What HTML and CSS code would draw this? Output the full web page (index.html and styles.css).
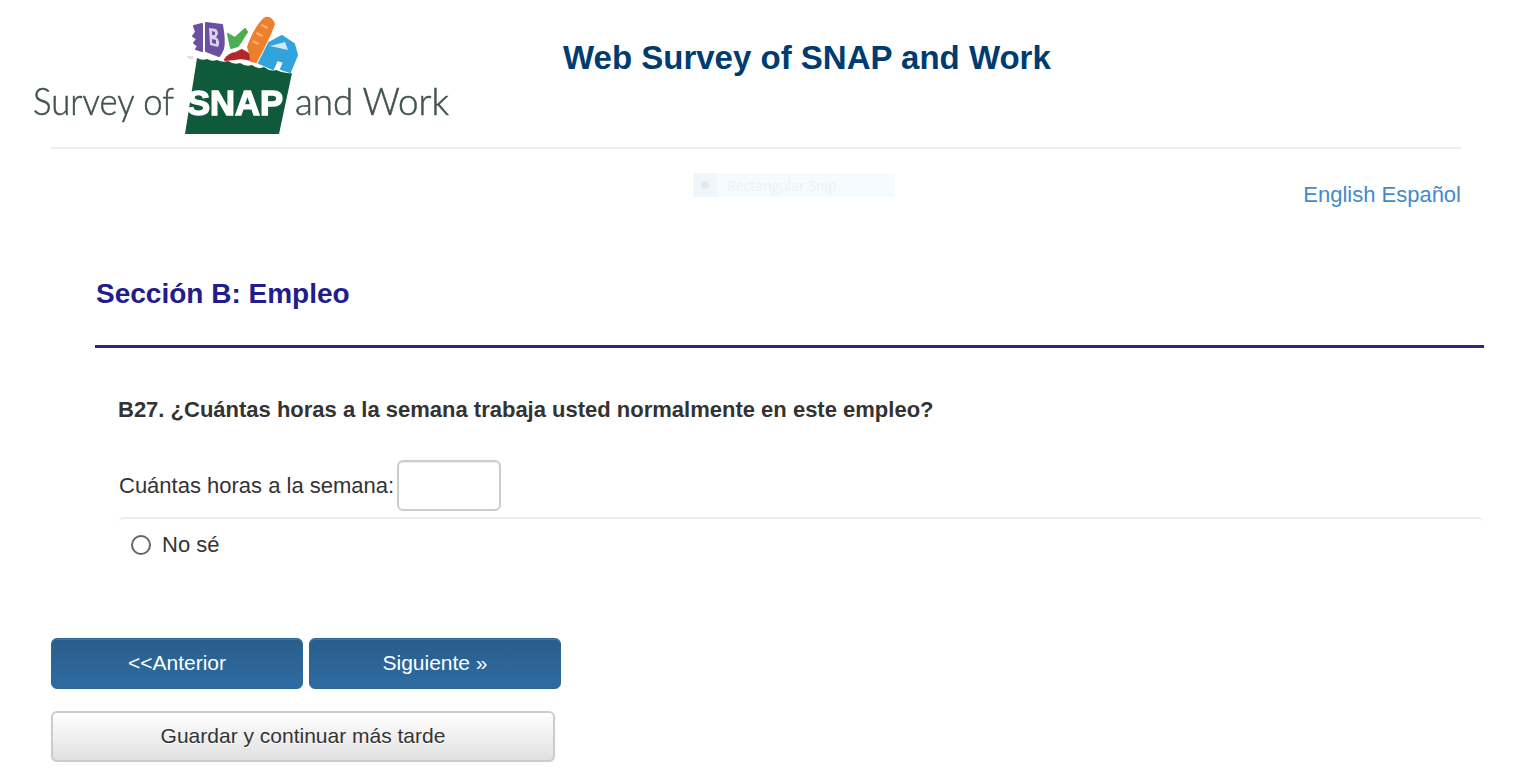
FILE: index.html
```html
<!DOCTYPE html>
<html lang="es">
<head>
    <meta charset="UTF-8">
    <title>Web Survey of SNAP and Work</title>
    <link rel="stylesheet" href="styles.css">
</head>
<body>
    <header class="site-header">
        <svg class="logo" width="430" height="135" viewBox="0 0 430 135" role="img" aria-label="Survey of SNAP and Work">
            <!-- cereal box -->
            <path class="food-box" d="M164 26 L172 24 L172 51 L166 49 L168 46 L164 43 L167 39 L163 36 L166 32 Z"/>
            <path class="food-box" d="M176 23 L192 25 Q195 42 193 49 Q191 54 189 56 L176 51 Z"/>
            <path class="food-box-letter" d="M179 28 L186 29 Q190 33 186 37 Q191 41 188 47 L180 45 Z M182 31 L182 35 L185 35 L185 32 Z M182 39 L182 43 L186 44 L186 40 Z"/>
            <!-- greens -->
            <path class="food-greens" d="M198 34 L205 38 L215 29 L217 32 L208 46 L201 48 Z"/>
            <!-- apple -->
            <path class="food-apple" d="M195 60 Q198 54 206 53 L212 50 L219 54 L221 60 Q212 57 205 59 Z"/>
            <!-- bread -->
            <path class="food-bread" d="M218 47 Q224 29 234 19 Q240 15 244 24 Q240 36 226 62 L221 61 Q221 54 218 47 Z"/>
            <path class="food-bread-marks" d="M232 24 L238 27 L237 29 L231 26 Z M227 32 L233 35 L232 37 L226 34 Z M223 40 L229 43 L228 45 L222 42 Z"/>
            <!-- milk carton -->
            <path class="food-carton" d="M229 63 L239 43 L252 36 L264 44 L267 55 L260 72 L251 69 L254 62 L247 60 L243 69 Z"/>
            <path class="food-carton-light" d="M240 46 L255 42 L258 50 Z"/>
            <!-- bag -->
            <path class="logo-bag" d="M167 58 Q172 61 177 59 Q182 62 187 60 Q193 63 198 61 Q204 65 210 63 Q216 67 222 65 Q228 70 234 67 Q240 72 246 70 Q254 74 262 73 L249 134 L155 134 Z"/>
            <text class="logo-snap" x="157" y="115" textLength="96" lengthAdjust="spacingAndGlyphs">SNAP</text>
            <text class="logo-tm" x="157" y="59">TM</text>
            <text class="logo-text" x="3" y="115" textLength="141" lengthAdjust="spacingAndGlyphs">Survey of</text>
            <text class="logo-text" x="265" y="115" textLength="154" lengthAdjust="spacingAndGlyphs">and Work</text>
        </svg>
        <h1 class="site-title">Web Survey of SNAP and Work</h1>
    </header>

    <div class="snip-ghost">
        <span class="snip-icon"><span class="snip-dot"></span></span>
        <span class="snip-label">Rectangular Snip</span>
    </div>

    <main class="page">
        <div class="lang-links">
            <a href="#">English</a>
            <a href="#">Español</a>
        </div>

        <h2 class="section-title">Sección B: Empleo</h2>

        <form class="question">
            <p class="question-text">B27. ¿Cuántas horas a la semana trabaja usted normalmente en este empleo?</p>

            <div class="hours-row">
                <label for="hours">Cuántas horas a la semana:</label>
                <input type="text" id="hours" name="hours">
            </div>

            <label class="radio-row">
                <span class="radio"></span>
                No sé
            </label>
        </form>

        <div class="nav-buttons">
            <button type="button" class="btn-primary">&lt;&lt;Anterior</button>
            <button type="button" class="btn-primary">Siguiente »</button>
        </div>
        <button type="button" class="btn-save">Guardar y continuar más tarde</button>
    </main>
</body>
</html>
```

FILE: styles.css
```css
body {
    font-family: "Liberation Sans", Arial, sans-serif;
    background-color: #fff;
    color: #333;
    margin: 0;
    padding: 0;
    position: relative;
}

.site-header {
    display: flex;
    height: 147px;
    margin: 0 66px 0 51px;
    border-bottom: 2px solid #eee;
}

.logo {
    flex: none;
    margin-left: -21px;
    filter: blur(0.7px);
}

.logo path {
    stroke-width: 2px;
    stroke-linejoin: round;
}

.food-box {
    fill: #6a4fa3;
    stroke: #6a4fa3;
}

.food-box-letter {
    fill: #d9d3ea;
    fill-rule: evenodd;
}

.food-greens {
    fill: #4cae52;
    stroke: #4cae52;
}

.food-apple {
    fill: #b5262a;
    stroke: #b5262a;
}

.food-bread {
    fill: #ee7f2d;
    stroke: #ee7f2d;
}

.food-bread-marks {
    fill: #f7b27a;
}

.food-carton {
    fill: #32a4dc;
    stroke: #32a4dc;
}

.food-carton-light {
    fill: #cfe9f7;
}

.logo-bag {
    fill: #0e5a3a;
}

.logo-snap {
    font-family: "Liberation Sans", Arial, sans-serif;
    font-size: 35px;
    font-weight: bold;
    fill: #fff;
    stroke: #fff;
    stroke-width: 1.5px;
}

.logo-tm {
    font-family: "Liberation Sans", Arial, sans-serif;
    font-size: 4px;
    fill: #aaa;
}

.logo-text {
    font-family: Lato, "Liberation Sans", sans-serif;
    font-size: 38px;
    font-weight: 300;
    fill: #40534c;
    stroke: #40534c;
    stroke-width: 0.5px;
}

.site-title {
    margin: 36px 0 0 103px;
    font-size: 33px;
    line-height: 44px;
    font-weight: bold;
    color: #003c71;
}

.snip-ghost {
    position: absolute;
    left: 693px;
    top: 173px;
    width: 202px;
    height: 24px;
    display: flex;
    background: #f5fbff;
    color: #eef0f2;
    font-family: "Open Sans", sans-serif;
    font-size: 14px;
    line-height: 25px;
}

.snip-icon {
    width: 24px;
    display: flex;
    align-items: center;
    justify-content: center;
    background: #eff7fd;
    margin-right: 10px;
}

.snip-dot {
    width: 8px;
    height: 8px;
    border-radius: 50%;
    background: #e6e9ec;
}

.page {
    padding: 0 43px 0 51px;
}

.lang-links {
    display: flex;
    justify-content: flex-end;
    gap: 6px;
    padding: 33px 23px 0 0;
    font-size: 22px;
    line-height: 26px;
}

.lang-links a {
    color: #428bca;
    text-decoration: none;
}

.section-title {
    margin: 68px 0 0 44px;
    padding-bottom: 33px;
    border-bottom: 3px solid #2a2785;
    font-size: 28px;
    line-height: 36px;
    font-weight: bold;
    color: #221c8c;
    text-indent: 1px;
}

.question {
    margin-left: 67px;
    font-size: 22px;
}

.question-text {
    margin: 0;
    padding-top: 48px;
    font-size: 22px;
    line-height: 28px;
    font-weight: bold;
}

.hours-row {
    display: flex;
    align-items: center;
    gap: 3px;
    margin: 36px 0 6px 1px;
    height: 51px;
}

.hours-row input {
    width: 100px;
    height: 47px;
    padding: 0;
    border: 2px solid #ccc;
    border-radius: 6px;
    box-shadow: inset 0 1px 1px rgba(0, 0, 0, 0.075);
}

.radio-row {
    display: flex;
    align-items: center;
    gap: 11px;
    padding: 11px 0 0 13px;
    border-top: 2px solid #eee;
    border-radius: 6px 6px 0 0;
    line-height: 30px;
}

.radio {
    width: 16px;
    height: 16px;
    border: 2px solid #666;
    border-radius: 50%;
}

.nav-buttons {
    display: flex;
    gap: 6px;
    margin-top: 78px;
}

button {
    font-family: inherit;
    font-size: 21px;
    cursor: pointer;
}

.btn-primary {
    width: 252px;
    height: 51px;
    padding: 0 0 2px;
    color: #fff;
    background: linear-gradient(#2a5d8c, #2d6ca2);
    border: 1px solid #2b669a;
    border-radius: 6px;
    box-shadow: inset 0 1px 0 rgba(255, 255, 255, 0.15);
}

.btn-save {
    display: block;
    width: 504px;
    height: 51px;
    margin-top: 22px;
    padding: 0 0 2px;
    color: #333;
    background: linear-gradient(#fff, #e0e0e0);
    border: 2px solid #ccc;
    border-radius: 6px;
    box-shadow: 0 1px 1px rgba(0, 0, 0, 0.08);
    text-shadow: 0 1px 0 #fff;
}
```
